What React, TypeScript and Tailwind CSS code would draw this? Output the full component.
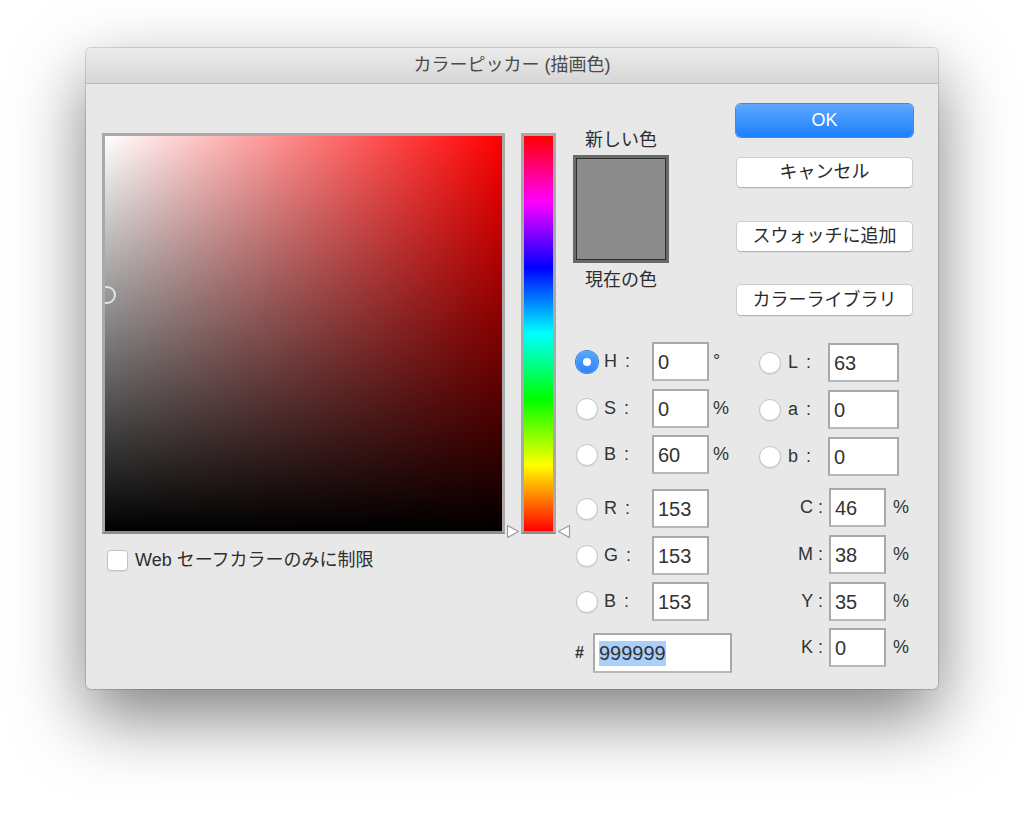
import React from 'react';

const FONT = "font-['Liberation_Sans','Noto_Sans_CJK_JP',sans-serif]";

function Radio({ checked = false }: { checked?: boolean }) {
  if (checked) {
    return (
      <span className="flex h-[22px] w-[22px] shrink-0 items-center justify-center rounded-full bg-[linear-gradient(to_bottom,#5aa6fd,#2a86f8)] shadow-[0_0_0_1px_#2f7fe6]">
        <span className="block h-[8px] w-[8px] rounded-full bg-white" />
      </span>
    );
  }
  return (
    <span className="block h-[22px] w-[22px] shrink-0 rounded-full border border-[#c4c4c4] bg-white shadow-[0_1px_1px_rgba(0,0,0,0.08)]" />
  );
}

function Field({ value, w }: { value: string; w: string }) {
  return (
    <div
      className={`${w} flex h-[39px] items-center border-2 border-[#a9a9a9] border-b-[#b8b8b8] bg-white pl-[4px] text-[20px] text-[#333]`}
    >
      {value}
    </div>
  );
}

function Label({ text, w }: { text: string; w: string }) {
  return (
    <span className={`${w} flex`}>
      <span>{text}</span>
      <span className="ml-[8px]">:</span>
    </span>
  );
}

const LEFT_ROWS: Array<{ label: string; value: string; unit: string; mt: string; on?: boolean }> = [
  { label: 'H', value: '0', unit: '°', mt: 'mt-0', on: true },
  { label: 'S', value: '0', unit: '%', mt: 'mt-[8px]' },
  { label: 'B', value: '60', unit: '%', mt: 'mt-[7px]' },
  { label: 'R', value: '153', unit: '', mt: 'mt-[15px]' },
  { label: 'G', value: '153', unit: '', mt: 'mt-[8px]' },
  { label: 'B', value: '153', unit: '', mt: 'mt-[7px]' },
];

const LAB_ROWS = [
  { label: 'L', value: '63', mt: 'mt-[1px]' },
  { label: 'a', value: '0', mt: 'mt-[8px]' },
  { label: 'b', value: '0', mt: 'mt-[8px]' },
];

const CMYK_ROWS = [
  { label: 'C', value: '46', mt: 'mt-[12px]' },
  { label: 'M', value: '38', mt: 'mt-[8px]' },
  { label: 'Y', value: '35', mt: 'mt-[8px]' },
  { label: 'K', value: '0', mt: 'mt-[7px]' },
];

function Button({ children, mt, h }: { children: React.ReactNode; mt: string; h: string }) {
  return (
    <div
      className={`${mt} ${h} flex w-[177px] items-center justify-center rounded-[5px] border border-[#cdcdcd] border-b-[#b3b3b3] bg-white text-[18px] text-[#2a2a2a] shadow-[0_1px_1px_rgba(0,0,0,0.06)]`}
    >
      {children}
    </div>
  );
}

export default function App() {
  return (
    <div className={`min-h-[814px] bg-white pl-[86px] pt-[48px] ${FONT}`}>
      <div className="flex h-[641px] w-[852px] flex-col overflow-hidden rounded-[5px] bg-[#e8e8e8] shadow-[0_28px_70px_rgba(0,0,0,0.5),0_0_0_1px_rgba(0,0,0,0.14)]">
        {/* title bar */}
        <div className="flex h-[36px] shrink-0 items-center justify-center border-b border-[#b9b9b9] bg-[linear-gradient(to_bottom,#ececec,#d6d6d6)] text-[18px] text-[#4b4b4b]">
          カラーピッカー (描画色)
        </div>

        <div className="flex items-start pl-[16px] pt-[20px]">
          {/* color field */}
          <div className="mt-[29px] w-[403px]">
            <div className="relative h-[401px] w-[403px] overflow-hidden border-[3px] border-[#a9a9a9] border-b-[#8d8d8d] bg-[linear-gradient(to_right,#fff,#f00)]">
              <div className="absolute inset-0 bg-[linear-gradient(to_bottom,rgba(0,0,0,0),#000)]" />
              <div className="absolute left-[-7px] top-[150px] h-[18px] w-[18px] rounded-full border-2 border-[#e4e4e4]" />
            </div>
            <div className="mt-[15px] flex h-[22px] items-center">
              <span className="ml-[5px] block h-[21px] w-[21px] rounded-[4px] border border-[#c2c2c2] bg-white shadow-[0_1px_1px_rgba(0,0,0,0.06)]" />
              <span className="ml-[7px] text-[18px] text-[#2e2e2e]">Web セーフカラーのみに制限</span>
            </div>
          </div>

          {/* hue slider */}
          <div className="relative ml-[16px] mt-[29px]">
            <div className="h-[401px] w-[35px] border-[3px] border-[#a9a9a9] border-b-[#8d8d8d] bg-[linear-gradient(to_bottom,#f00_0%,#f0f_16.67%,#00f_33.33%,#0ff_50%,#0f0_66.67%,#ff0_83.33%,#f00_100%)]" />
            <svg className="absolute left-[-15px] top-[391px]" width="14" height="15" viewBox="0 0 14 15">
              <path d="M1.5 1.5 L12.5 7.5 L1.5 13.5 Z" fill="#fff" stroke="#9c9c9c" strokeWidth="1.2" strokeLinejoin="round" />
            </svg>
            <svg className="absolute right-[-15px] top-[391px]" width="14" height="15" viewBox="0 0 14 15">
              <path d="M12.5 1.5 L1.5 7.5 L12.5 13.5 Z" fill="#fff" stroke="#9c9c9c" strokeWidth="1.2" strokeLinejoin="round" />
            </svg>
          </div>

          {/* right side */}
          <div className="ml-[17px] w-[340px]">
            <div className="flex items-start">
              <div className="flex w-[96px] flex-col items-center pt-[26px] text-[18px] leading-[20px] text-[#2e2e2e]">
                <span>新しい色</span>
                <div className="mt-[5px] h-[108px] w-[96px] border-[3px] border-[#6a6a6a] bg-[#8c8c8c] shadow-[inset_0_0_0_1px_#2e2e2e]" />
                <span className="mt-[7px]">現在の色</span>
              </div>
              <div className="ml-auto flex w-[177px] flex-col">
                <div className="flex h-[33px] w-[177px] items-center justify-center rounded-[5px] bg-[linear-gradient(to_bottom,#5ea8ff,#1d7ffb)] text-[18px] text-white shadow-[0_0_0_1px_#3d8af2]">
                  OK
                </div>
                <Button mt="mt-[20px]" h="h-[31px]">キャンセル</Button>
                <Button mt="mt-[33px]" h="h-[31px]">スウォッチに追加</Button>
                <Button mt="mt-[32px]" h="h-[32px]">カラーライブラリ</Button>
              </div>
            </div>

            <div className="mt-[26px] flex pl-[2px] text-[18px] text-[#333]">
              {/* HSB / RGB */}
              <div className="w-[184px]">
                {LEFT_ROWS.map((r, i) => (
                  <div key={i} className={`${r.mt} flex h-[39px] items-center`}>
                    <span className="ml-[1px] block">
                      <Radio checked={r.on} />
                    </span>
                    <span className="ml-[6px]">
                      <Label text={r.label} w="w-[48px]" />
                    </span>
                    <Field value={r.value} w="w-[57px]" />
                    <span className="ml-[4px]">{r.unit}</span>
                  </div>
                ))}
                <div className="mt-[12px] flex h-[40px] items-center">
                  <span className="w-[18px] text-[16px] font-bold">#</span>
                  <div className="flex h-[40px] w-[139px] items-center border-2 border-[#a9a9a9] border-b-[#b8b8b8] bg-white pl-[4px] text-[20px] text-[#333]">
                    <span className="bg-[#a9cffb] leading-[25px]">999999</span>
                  </div>
                </div>
              </div>

              {/* Lab / CMYK */}
              <div className="w-[154px]">
                {LAB_ROWS.map((r) => (
                  <div key={r.label} className={`${r.mt} flex h-[39px] items-center`}>
                    <Radio />
                    <span className="ml-[7px]">
                      <Label text={r.label} w="w-[40px]" />
                    </span>
                    <Field value={r.value} w="w-[71px]" />
                  </div>
                ))}
                {CMYK_ROWS.map((r) => (
                  <div key={r.label} className={`${r.mt} flex h-[39px] items-center`}>
                    <span className="w-[70px] pr-[6px] text-right">{r.label} :</span>
                    <Field value={r.value} w="w-[57px]" />
                    <span className="ml-[7px]">%</span>
                  </div>
                ))}
              </div>
            </div>
          </div>
        </div>
      </div>
    </div>
  );
}
